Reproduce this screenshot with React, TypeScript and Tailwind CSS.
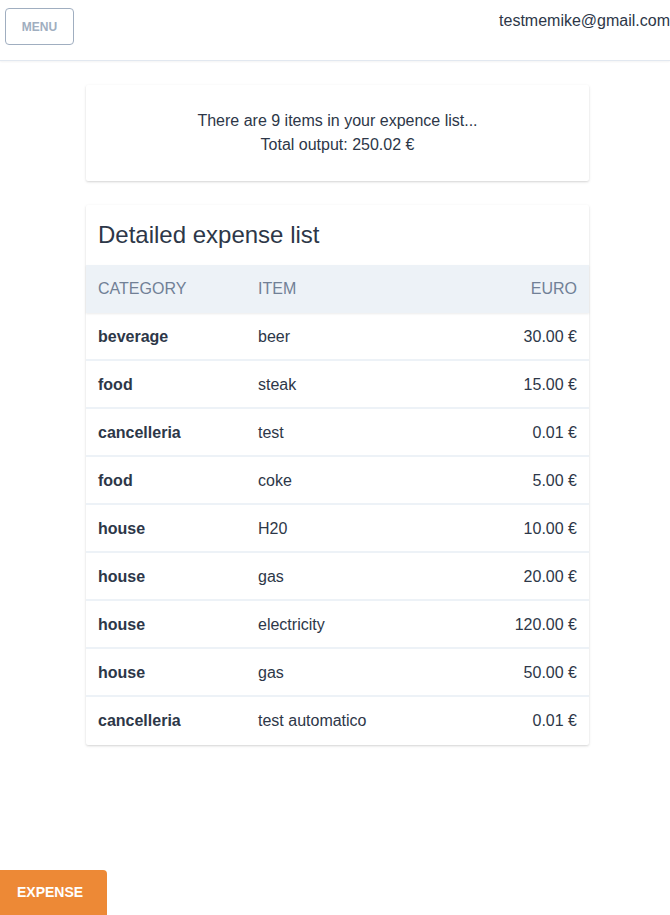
import React from "react";

const rows = [
  ["beverage", "beer", "30.00 €"],
  ["food", "steak", "15.00 €"],
  ["cancelleria", "test", "0.01 €"],
  ["food", "coke", "5.00 €"],
  ["house", "H20", "10.00 €"],
  ["house", "gas", "20.00 €"],
  ["house", "electricity", "120.00 €"],
  ["house", "gas", "50.00 €"],
  ["cancelleria", "test automatico", "0.01 €"],
];

export default function App() {
  return (
    <div
      className="relative min-h-[915px] bg-white text-[#2d3748]"
      style={{ fontFamily: '"Liberation Sans", Arial, sans-serif' }}
    >
      <header className="flex h-[61px] items-start justify-between border-b border-[#e2e8f0] shadow-[0_1px_2px_rgba(0,0,0,0.05)]">
        <button className="ml-[5px] mt-[8px] h-[37px] w-[69px] rounded-[4px] border border-[#a0aec0] text-[12px] font-bold text-[#a0aec0]">
          MENU
        </button>
        <div className="mr-0 mt-[11px] text-[16px] leading-[20px] text-[#2d3748]">
          testmemike@gmail.com
        </div>
      </header>

      <div className="ml-[86px] mt-[24px] w-[503px]">
        <div className="flex h-[96px] flex-col items-center justify-center rounded-[2px] bg-white text-[16px] leading-[24px] shadow-[0_1px_3px_rgba(0,0,0,0.12),0_1px_2px_rgba(0,0,0,0.06)]">
          <div>There are 9 items in your expence list...</div>
          <div>Total output: 250.02 €</div>
        </div>

        <div className="mt-[24px] rounded-[2px] bg-white shadow-[0_1px_3px_rgba(0,0,0,0.12),0_1px_2px_rgba(0,0,0,0.06)]">
          <h2 className="px-[12px] pb-[14px] pt-[14px] text-[24px] leading-[32px]">Detailed expense list</h2>
          <div className="flex h-[48px] items-center bg-[#edf2f7] px-[12px] text-[16px] text-[#718096] shadow-[0_1px_2px_rgba(0,0,0,0.08)]">
            <div className="w-[160px]">CATEGORY</div>
            <div className="flex-1">ITEM</div>
            <div>EURO</div>
          </div>
          {rows.map((r, i) => (
            <div
              key={i}
              className={`flex h-[48px] items-center px-[12px] text-[16px] ${i < rows.length - 1 ? "border-b-2 border-[#edf2f7] pt-[1px]" : ""}`}
            >
              <div className="w-[160px] font-bold">{r[0]}</div>
              <div className="flex-1">{r[1]}</div>
              <div>{r[2]}</div>
            </div>
          ))}
        </div>
      </div>

      <button className="absolute bottom-0 left-0 h-[45px] w-[107px] rounded-tr-[4px] bg-[#ed8936] pl-[17px] text-left text-[14px] font-bold text-white">
        EXPENSE
      </button>
    </div>
  );
}
